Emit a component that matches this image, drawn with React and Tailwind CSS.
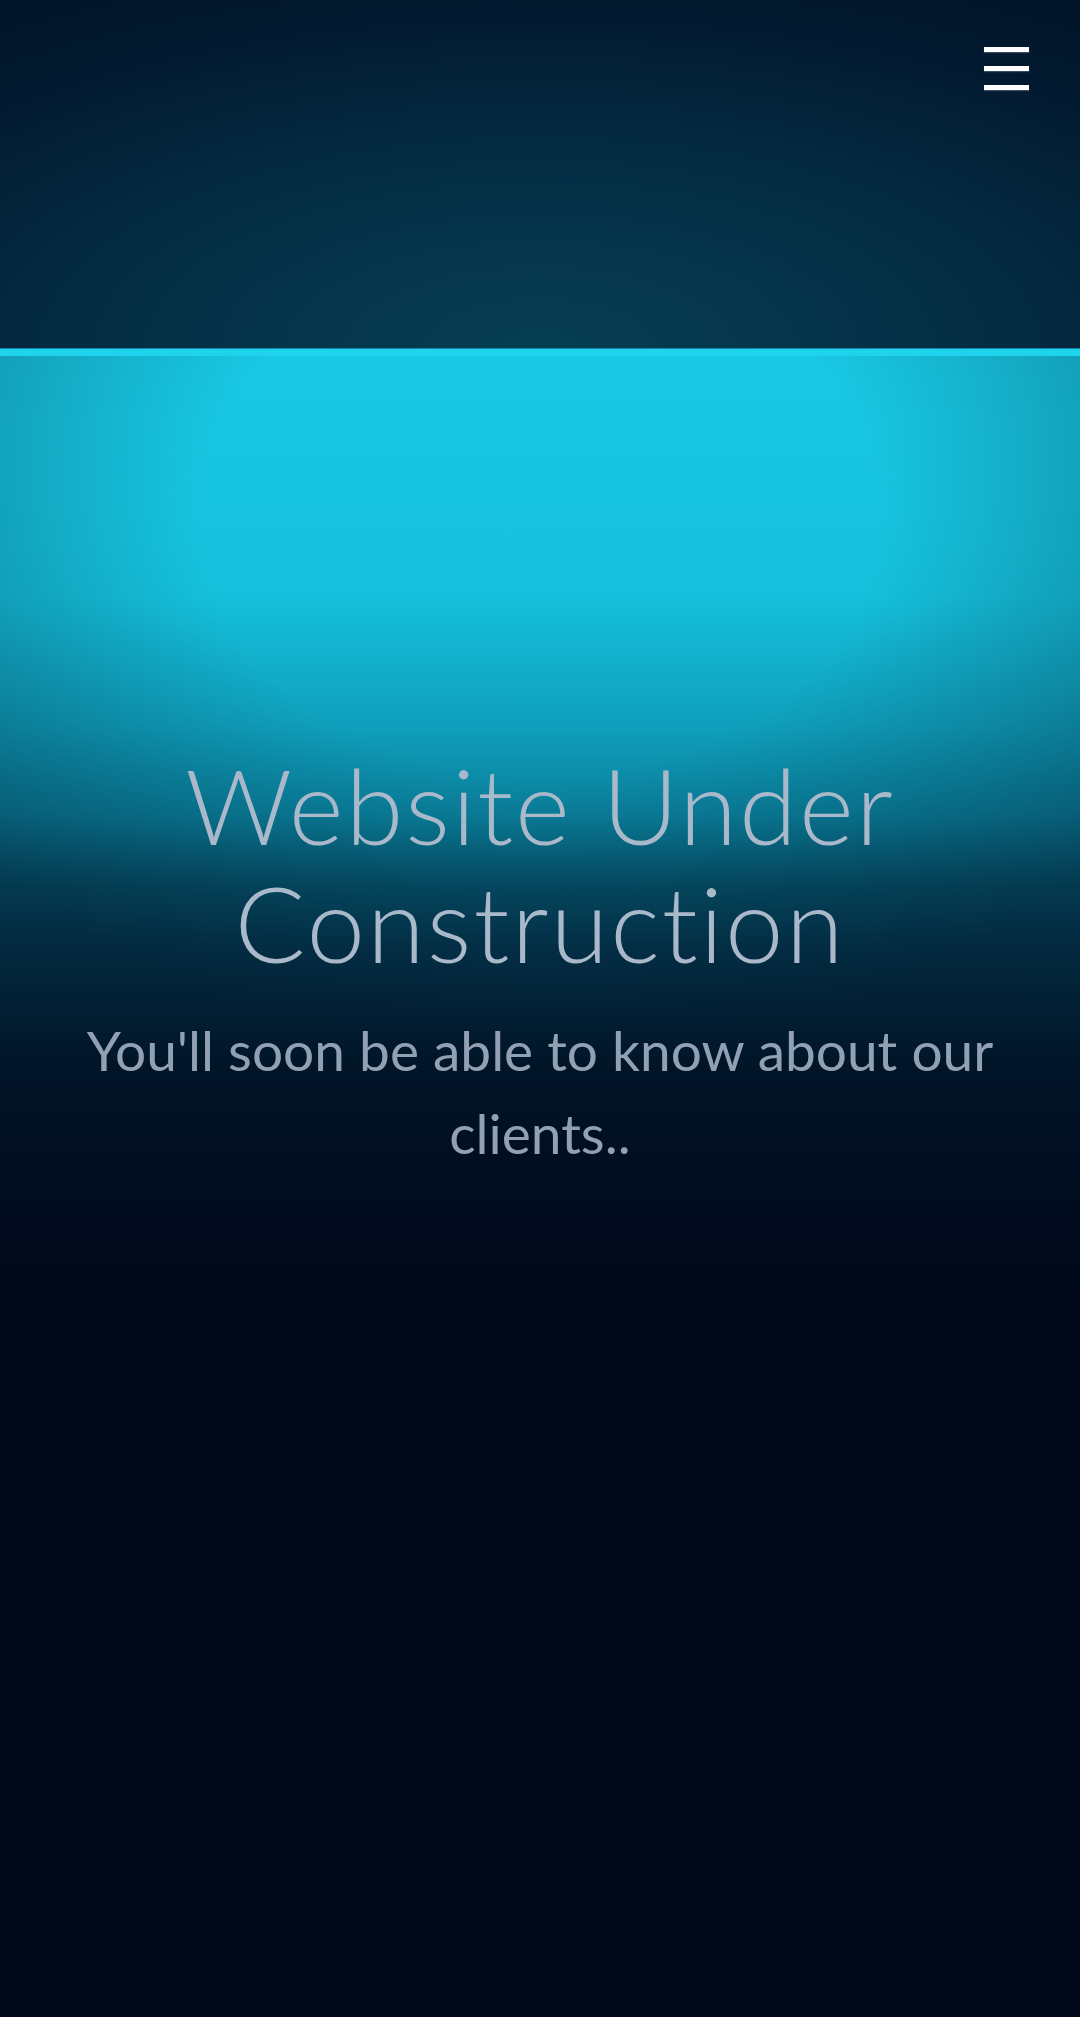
export default function App() {
  return (
    <div className="min-h-[2017px] w-full flex flex-col bg-[#000818]">
      <header className="h-[348px] flex justify-end items-start pt-[47px] pr-[51px] bg-[radial-gradient(ellipse_1000px_420px_at_50%_100%,#063e54_0%,#042d44_45%,#021a30_80%,#021428_100%)]">
        <button className="flex flex-col gap-[14px]" aria-label="Menu">
          <span className="block w-[45px] h-[5px] bg-white shadow-[0_1px_1px_rgba(120,140,160,0.45)]"></span>
          <span className="block w-[45px] h-[5px] bg-white shadow-[0_1px_1px_rgba(120,140,160,0.45)]"></span>
          <span className="block w-[45px] h-[5px] bg-white shadow-[0_1px_1px_rgba(120,140,160,0.45)]"></span>
        </button>
      </header>
      <div className="h-[8px] bg-[#20d3ec] border-t border-[#0e8aa6]"></div>
      <main className="flex-1 flex flex-col items-center px-[40px] pt-[389px] bg-[radial-gradient(ellipse_66%_540px_at_50%_160px,transparent_48%,rgba(0,10,28,0.32)_100%),linear-gradient(to_bottom,#18c8e4_0px,#15c0dc_240px,#0f9fbc_370px,#0a7e9a_460px,#055068_530px,#043850_590px,#021a2e_710px,#010e22_820px,#000818_950px)]">
        <h1 className="text-center text-[105px] leading-[118px] font-light tracking-[2px] [font-variant-ligatures:none] text-[#aab9ca] font-['Lato','Liberation_Sans',sans-serif]">
          Website Under
          <br />
          Construction
        </h1>
        <p className="mt-[28px] text-center text-[55px] leading-[83px] font-normal text-[#92a0b4] font-['Lato','Liberation_Sans',sans-serif]">
          You'll soon be able to know about our
          <br />
          clients..
        </p>
      </main>
    </div>
  );
}
